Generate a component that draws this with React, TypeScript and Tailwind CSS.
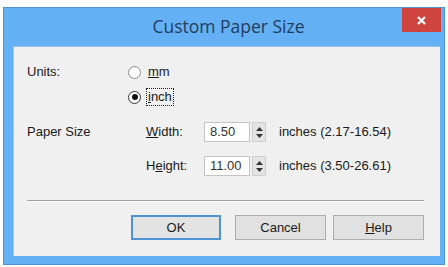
import React from "react";

function Radio({ checked }: { checked?: boolean }) {
  return (
    <span
      className={
        "w-[13px] h-[13px] rounded-full border bg-white flex items-center justify-center shrink-0 " +
        (checked ? "border-[#333333]" : "border-[#8c8c8c]")
      }
    >
      {checked && <span className="w-[6px] h-[6px] rounded-full bg-[#111111]" />}
    </span>
  );
}

function Spinner() {
  return (
    <div className="w-[14px] h-[20px] bg-[#e4e4e4] border border-[#cfcfcf] flex flex-col items-center justify-center gap-[3px]">
      <svg width="7" height="4" viewBox="0 0 7 4">
        <path d="M3.5 0 L7 4 L0 4 Z" fill="#333" />
      </svg>
      <svg width="7" height="4" viewBox="0 0 7 4">
        <path d="M0 0 L7 0 L3.5 4 Z" fill="#333" />
      </svg>
    </div>
  );
}

function NumField({ value }: { value: string }) {
  return (
    <div className="flex items-center">
      <div className="w-[46px] h-[20px] bg-white border border-[#c4c4c4] flex items-center pl-[5px] text-[13px] text-[#333]">
        {value}
      </div>
      <div className="w-[2px]" />
      <Spinner />
    </div>
  );
}

export default function App() {
  return (
    <div className="w-[448px] h-[267px] bg-white font-['Liberation_Sans',Arial,sans-serif] text-[13px] text-[#1a1a1a] pt-[7px] pl-[3px]">
      <div className="w-[442px] h-[258px] bg-[#63b0f5] shadow-[inset_0_0_0_1px_#4d93d6] flex flex-col pl-[10px] pr-[5px] pb-[9px]">
        <div className="relative h-[39px] shrink-0">
          <div className="absolute left-0 right-0 top-[8px] text-center font-['Open_Sans',sans-serif] text-[17.5px] leading-[22px] text-[#243d5c] pl-[4px]">
            Custom Paper Size
          </div>
          <div className="absolute right-[-1px] top-[1px] w-[39px] h-[24px] bg-[#d0443f] flex items-center justify-center">
            <svg width="9" height="9" viewBox="0 0 9 9">
              <path d="M1 1 L8 8 M8 1 L1 8" stroke="#fff" strokeWidth="2.2" />
            </svg>
          </div>
        </div>
        <div className="flex-1 bg-[#f0f0f0] border-t border-l border-[#9dc2e6] flex flex-col pl-[13px]">
          <div className="mt-[15px] h-[20px] flex items-center">
            <div className="w-[101px]">Units:</div>
            <Radio />
            <span className="ml-[7px]">
              <span className="underline">m</span>m
            </span>
          </div>
          <div className="mt-[5px] h-[20px] flex items-center">
            <div className="w-[101px]" />
            <Radio checked />
            <span className="ml-[5px] border border-dotted border-[#222] px-[1px] leading-[16px]">
              <span className="underline">i</span>nch
            </span>
          </div>
          <div className="mt-[15px] h-[20px] flex items-center">
            <div className="w-[119px]">Paper Size</div>
            <div className="w-[58px]">
              <span className="underline">W</span>idth:
            </div>
            <NumField value="8.50" />
            <div className="ml-[13px]">inches (2.17-16.54)</div>
          </div>
          <div className="mt-[14px] h-[20px] flex items-center">
            <div className="w-[119px]" />
            <div className="w-[58px]">
              H<span className="underline">e</span>ight:
            </div>
            <NumField value="11.00" />
            <div className="ml-[13px]">inches (3.50-26.61)</div>
          </div>
          <div className="mt-[24px] w-[397px] h-[2px] border-t border-[#a0a0a0] border-b border-b-white" />
          <div className="mt-[13px] flex pl-[104px]">
            <div className="w-[90px] h-[25px] border-2 border-[#4f94d0] bg-[#e3e3e3] flex items-center justify-center">
              OK
            </div>
            <div className="ml-[14px] w-[91px] h-[25px] border border-[#adadad] bg-[#e1e1e1] flex items-center justify-center">
              Cancel
            </div>
            <div className="ml-[7px] w-[91px] h-[25px] border border-[#adadad] bg-[#e1e1e1] flex items-center justify-center">
              <span>
                <span className="underline">H</span>elp
              </span>
            </div>
          </div>
        </div>
      </div>
    </div>
  );
}
